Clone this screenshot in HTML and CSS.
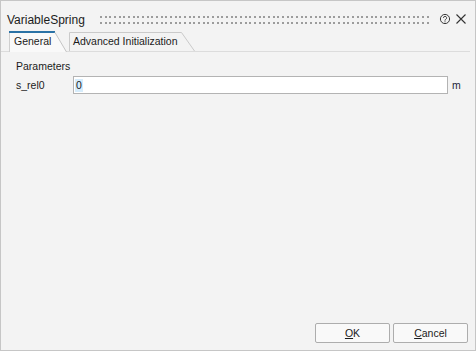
FILE: index.html
```html
<!DOCTYPE html>
<html>
<head>
<meta charset="utf-8">
<link rel="stylesheet" href="styles.css">
</head>
<body>
<div class="dialog">
  <div class="titlebar">
    <span class="title">VariableSpring</span>
    <div class="grip"></div>
    <svg class="help" width="12" height="12" viewBox="0 0 12 12">
      <circle cx="6" cy="6" r="4.6" fill="none" stroke="#3a3a3a" stroke-width="1"/>
      <path d="M4.5 4.9 a1.55 1.55 0 1 1 2.2 1.4 c-0.5 0.3 -0.7 0.5 -0.7 1.1 v0.3" fill="none" stroke="#3a3a3a" stroke-width="1"/>
      <circle cx="6" cy="8.8" r="0.6" fill="#3a3a3a"/>
    </svg>
    <svg class="close" width="10" height="10" viewBox="0 0 10 10">
      <path d="M0.5 0.5 L9.5 9.5 M9.5 0.5 L0.5 9.5" stroke="#333" stroke-width="1.1"/>
    </svg>
  </div>
  <div class="tabs">
    <div class="tab tab-active">
      <svg class="tab-shape" width="58" height="21" viewBox="0 0 58 21">
        <path d="M0 21 V1 H46 L57.5 21 Z" fill="#f9f9f9"/>
        <path d="M0.5 21 V2" stroke="#cfcfcf" fill="none"/>
        <rect x="0" y="0" width="46" height="2" fill="#2a72a6"/>
        <path d="M46 1.5 L57.5 21" stroke="#c4c4c4" fill="none"/>
      </svg>
      <span class="tab-label">General</span>
    </div>
    <div class="tab tab-second">
      <svg class="tab-shape" width="127" height="20" viewBox="0 0 127 20">
        <path d="M0.5 20 V1.5 H112.5 L125.5 20" stroke="#cacaca" fill="none"/>
      </svg>
      <span class="tab-label">Advanced Initialization</span>
    </div>
  </div>
  <div class="content">
    <div class="group-label">Parameters</div>
    <div class="row">
      <span class="field-label">s_rel0</span>
      <div class="input"><span class="sel">0</span></div>
      <span class="unit">m</span>
    </div>
  </div>
  <div class="footer">
    <button class="btn"><u>O</u>K</button>
    <button class="btn"><u>C</u>ancel</button>
  </div>
</div>
</body>
</html>
```
FILE: styles.css
```css
html, body {
  margin: 0;
  padding: 0;
  background: #f3f3f3;
}
.dialog {
  width: 476px;
  height: 351px;
  box-sizing: border-box;
  border: 1px solid #c6c6c6;
  background: #f3f3f3;
  display: flex;
  flex-direction: column;
  font-family: "Liberation Sans", Arial, sans-serif;
  font-size: 10.5px;
  color: #1b1b1b;
}
.titlebar {
  height: 30px;
  box-sizing: border-box;
  padding: 12px 9px 0 6px;
  display: flex;
  align-items: flex-start;
}
.title {
  font-size: 12px;
  line-height: 14px;
  color: #1b1b1b;
}
.grip {
  flex: 1;
  height: 8px;
  margin: 3px 9px 0 15px;
  background-image:
    conic-gradient(at 2px 2px, transparent 75%, #9c9c9c 0),
    conic-gradient(at 2px 2px, transparent 75%, #9c9c9c 0),
    conic-gradient(at 2px 2px, transparent 75%, #9c9c9c 0);
  background-size: 14px 6px, 14px 6px, 14px 6px;
  background-position: 0 0, 5px 0, 9px 0;
}
.help {
  margin-top: 0;
}
.close {
  margin-left: 5px;
  margin-top: 1px;
}
.tabs {
  height: 20px;
  border-bottom: 1px solid #dcdcdc;
  margin-right: 5px;
  padding-left: 8px;
  display: flex;
  align-items: flex-start;
}
.tab {
  position: relative;
  height: 20px;
  line-height: 20px;
}
.tab-active {
  width: 58px;
  height: 21px;
  margin-bottom: -1px;
  z-index: 1;
}
.tab-second {
  width: 127px;
  margin-left: 2px;
}
.tab-shape {
  position: absolute;
  left: 0;
  top: 0;
}
.tab-label {
  position: relative;
  display: block;
  padding-left: 5px;
  white-space: nowrap;
}
.tab-second .tab-label {
  padding-left: 4px;
}
.content {
  flex: 1;
  padding: 7px 0 0 15px;
}
.group-label {
  line-height: 14px;
}
.row {
  display: flex;
  align-items: center;
  height: 18px;
  margin-top: 3px;
}
.field-label {
  width: 57px;
  line-height: 14px;
}
.input {
  width: 375px;
  height: 18px;
  box-sizing: border-box;
  border: 1px solid #b3b3b3;
  background: #ffffff;
  padding-left: 1px;
  line-height: 16px;
  display: flex;
  align-items: center;
}
.sel {
  background: #d6ecfb;
  padding: 0 1px;
  line-height: 13px;
}
.unit {
  margin-left: 4px;
  line-height: 14px;
  color: #1d1d3a;
}
.footer {
  display: flex;
  justify-content: flex-end;
  gap: 3px;
  padding: 0 7px 7px 0;
}
.btn {
  width: 75px;
  height: 20px;
  box-sizing: border-box;
  border: 1px solid #adadad;
  border-radius: 2px;
  background: #f9f9f9;
  font-family: "Liberation Sans", Arial, sans-serif;
  font-size: 10.5px;
  color: #1b1b1b;
  padding: 0;
  line-height: 18px;
}
.btn u {
  text-decoration: underline;
}
```
